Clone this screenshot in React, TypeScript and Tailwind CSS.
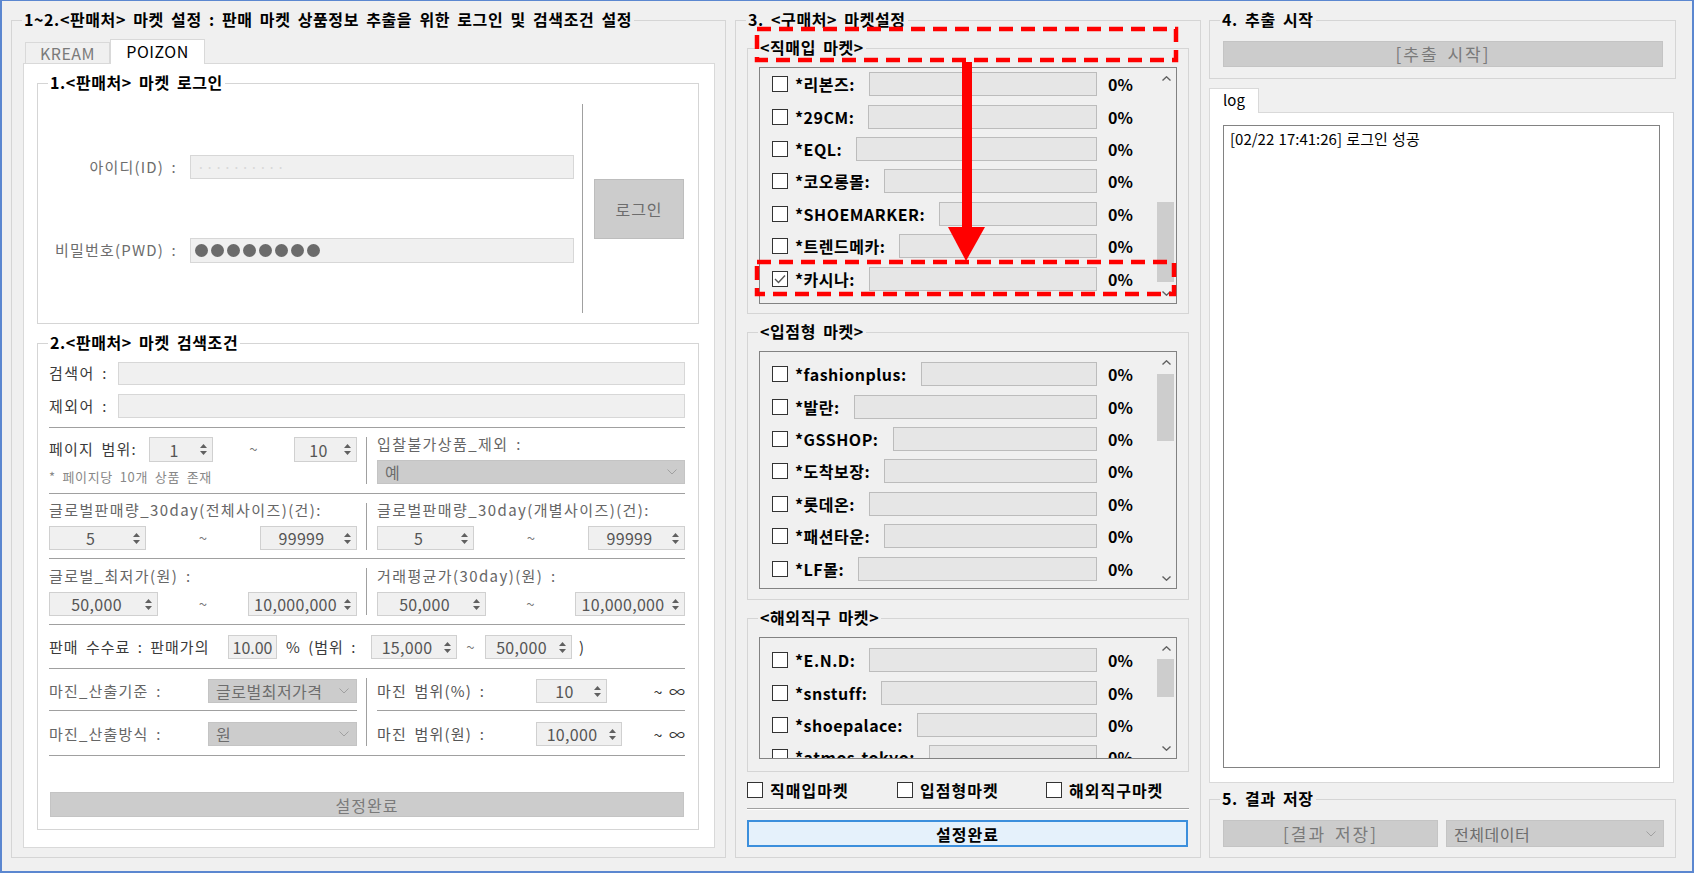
import React from 'react'

// WinForms-style "market settings" window: left = sell-side login/search,
// middle = buy-side market lists, right = extract/log/save.

type MarketRow = { name: string; checked?: boolean }

const DIRECT: MarketRow[] = [
  { name: '*리본즈:' },
  { name: '*29CM:' },
  { name: '*EQL:' },
  { name: '*코오롱몰:' },
  { name: '*SHOEMARKER:' },
  { name: '*트렌드메카:' },
  { name: '*카시나:', checked: true },
]
const STORE: MarketRow[] = ['*fashionplus:', '*발란:', '*GSSHOP:', '*도착보장:', '*롯데온:', '*패션타운:', '*LF몰:'].map(name => ({ name }))
const OVERSEAS: MarketRow[] = ['*E.N.D:', '*snstuff:', '*shoepalace:', '*atmos-tokyo:'].map(name => ({ name }))

function GroupBox({ title, bg = 'bg-[#f0f0f0]', className = '', children }: { title: string; bg?: string; className?: string; children?: React.ReactNode }) {
  return (
    <div className={`relative shrink-0 border border-[#d5d5d5] ${className}`}>
      <span className={`absolute left-[10px] top-[-12px] whitespace-nowrap px-[2px] text-[16px] font-bold leading-[20px] tracking-[0.6px] text-black ${bg}`}>{title}</span>
      {children}
    </div>
  )
}

const Sep = ({ className = '' }: { className?: string }) => (
  <div className={`h-[2px] shrink-0 border-y border-t-[#a0a0a0] border-b-white ${className}`} />
)

const VSep = ({ className = '' }: { className?: string }) => (
  <div className={`mx-[9px] w-[2px] shrink-0 border-x border-l-[#a0a0a0] border-r-white ${className}`} />
)

const Chevron = ({ color = '#a0a0a0' }: { color?: string }) => (
  <svg width="10" height="6" viewBox="0 0 10 6"><polyline points="0.5,0.5 5,5 9.5,0.5" fill="none" stroke={color} strokeWidth="1" /></svg>
)

function Spin({ value, className }: { value: string; className: string }) {
  return (
    <div className={`flex shrink-0 items-center border border-[#d0d0d0] bg-[#f0f0f0] ${className}`}>
      <span className="flex-1 text-center text-[16px] leading-none tracking-[0.3px] text-[#555]">{value}</span>
      <div className="mr-[3px] flex w-[11px] flex-col items-center gap-[3px]">
        <svg width="7" height="4" viewBox="0 0 7 4"><polygon points="0,4 3.5,0 7,4" fill="#606060" /></svg>
        <svg width="7" height="4" viewBox="0 0 7 4"><polygon points="0,0 3.5,4 7,0" fill="#606060" /></svg>
      </div>
    </div>
  )
}

function Combo({ value, className }: { value: string; className: string }) {
  return (
    <div className={`flex shrink-0 items-center border border-[#c4c4c4] bg-[#cccccc] px-[7px] text-[16px] tracking-[0.5px] text-[#6d6d6d] ${className}`}>
      <span className="flex-1 whitespace-nowrap leading-none">{value}</span>
      <Chevron />
    </div>
  )
}

function CheckBox({ checked }: { checked?: boolean }) {
  return (
    <div className="flex h-[16px] w-[16px] shrink-0 items-center justify-center border border-[#333] bg-white">
      {checked && (
        <svg width="12" height="10" viewBox="0 0 12 10"><polyline points="1,5 4.5,8.5 11,1.5" fill="none" stroke="#555" strokeWidth="1.4" /></svg>
      )}
    </div>
  )
}

function RangeBlock({ label, a, b, wa, wb, top = 'mt-[5px]' }: { label: string; a: string; b: string; wa: string; wb: string; top?: string }) {
  return (
    <div className="flex w-[308px] shrink-0 flex-col">
      <span className={`h-[20px] whitespace-nowrap text-[15px] leading-[20px] tracking-[1.4px] text-[#666] ${top}`}>{label}</span>
      <div className="mt-[6px] flex h-[24px] items-center">
        <Spin value={a} className={`h-full ${wa}`} />
        <span className="flex-1 text-center text-[15px] text-[#777]">~</span>
        <Spin value={b} className={`h-full ${wb}`} />
      </div>
    </div>
  )
}

function ListBox({ rows, className, padTop, thumbTop, thumbH }: { rows: MarketRow[]; className: string; padTop: string; thumbTop: number; thumbH: number }) {
  return (
    <div className={`flex w-[418px] border border-[#828282] bg-[#f0f0f0] ${className}`}>
      <div className={`min-w-0 flex-1 overflow-hidden pl-[12px] ${padTop}`}>
        {rows.map(r => (
          <div key={r.name} className="flex h-[32.4px] items-center">
            <CheckBox checked={r.checked} />
            <span className="ml-[7px] whitespace-nowrap text-[16px] font-bold leading-none tracking-[0.5px] text-black">{r.name}</span>
            <div className="ml-[14px] h-[24px] min-w-0 flex-1 border border-[#bcbcbc] bg-[#e6e6e6]" />
            <span className="ml-[11px] w-[48px] shrink-0 text-[16px] font-bold leading-none text-black">0%</span>
          </div>
        ))}
      </div>
      <div className="flex w-[20px] shrink-0 flex-col">
        <div className="flex h-[20px] items-center justify-center">
          <svg width="9" height="5" viewBox="0 0 9 5"><polyline points="0.5,4.5 4.5,0.8 8.5,4.5" fill="none" stroke="#606060" strokeWidth="1.4" /></svg>
        </div>
        <div className="flex-1">
          <div className="ml-[1px] w-[17px] bg-[#cdcdcd]" style={{ marginTop: thumbTop, height: thumbH }} />
        </div>
        <div className="flex h-[20px] items-center justify-center">
          <svg width="9" height="5" viewBox="0 0 9 5"><polyline points="0.5,0.5 4.5,4.2 8.5,0.5" fill="none" stroke="#606060" strokeWidth="1.4" /></svg>
        </div>
      </div>
    </div>
  )
}

function LoginGroup() {
  return (
    <GroupBox title="1.<판매처> 마켓 로그인" bg="bg-white" className="h-[241px] w-[662px]">
      <div className="flex pt-[20px]">
        <div className="flex w-[536px] flex-col">
          <div className="mt-[51px] flex h-[24px] items-center">
            <span className="w-[139px] text-right text-[15px] tracking-[1.2px] text-[#6d6d6d]">아이디(ID) :</span>
            <div className="ml-[13px] flex h-full flex-1 items-center border border-[#d7d7d7] bg-[#f0f0f0] pl-[6px] text-[14px] tracking-[1px] text-[#d8d8d8]">··········</div>
          </div>
          <div className="mt-[59px] flex h-[25px] items-center">
            <span className="w-[139px] text-right text-[15px] tracking-[1.2px] text-[#6d6d6d]">비밀번호(PWD) :</span>
            <div className="ml-[13px] flex h-full flex-1 items-center gap-[3px] border border-[#d7d7d7] bg-[#f0f0f0] pl-[4px]">
              {Array.from({ length: 8 }).map((_, i) => (
                <span key={i} className="h-[13px] w-[13px] rounded-full bg-[#6b6b6b]" />
              ))}
            </div>
          </div>
        </div>
        <div className="ml-[8px] h-[209px] w-[2px] border-x border-l-[#a0a0a0] border-r-white" />
        <div className="ml-[10px] mt-[75px] flex h-[60px] w-[90px] items-center justify-center border border-[#bdbdbd] bg-[#cccccc] text-[16px] tracking-[1px] text-[#6d6d6d]">로그인</div>
      </div>
    </GroupBox>
  )
}

function SearchGroup() {
  return (
    <GroupBox title="2.<판매처> 마켓 검색조건" bg="bg-white" className="mt-[19px] flex h-[487px] w-[662px] flex-col pl-[11px] pr-[13px] pt-[18px]">
      <div className="flex h-[23px] items-center">
        <span className="w-[69px] text-[15px] tracking-[1.4px] text-[#3a3a3a]">검색어 :</span>
        <div className="h-full flex-1 border border-[#d7d7d7] bg-[#f0f0f0]" />
      </div>
      <div className="mt-[9px] flex h-[24px] items-center">
        <span className="w-[69px] text-[15px] tracking-[1.4px] text-[#3a3a3a]">제외어 :</span>
        <div className="h-full flex-1 border border-[#d7d7d7] bg-[#f0f0f0]" />
      </div>
      <Sep className="mt-[9px]" />

      <div className="flex h-[64px]">
        <div className="flex w-[308px] shrink-0 flex-col">
          <div className="mt-[8px] flex h-[25px] items-center">
            <span className="w-[100px] whitespace-nowrap text-[15px] tracking-[1.2px] text-[#3a3a3a]">페이지 범위:</span>
            <Spin value="1" className="h-full w-[64px]" />
            <span className="flex-1 text-center text-[15px] text-[#777]">~</span>
            <Spin value="10" className="h-full w-[63px]" />
          </div>
          <span className="mt-[5px] h-[20px] text-[13px] leading-[20px] tracking-[0.7px] text-[#888]">* 페이지당 10개 상품 존재</span>
        </div>
        <VSep className="mt-[8px] h-[47px]" />
        <div className="flex w-[308px] shrink-0 flex-col">
          <span className="mt-[5px] h-[20px] text-[15px] leading-[20px] tracking-[1.4px] text-[#666]">입찰불가상품_제외 :</span>
          <Combo value="예" className="mt-[6px] h-[24px] w-full" />
        </div>
      </div>
      <Sep />

      <div className="flex h-[63px]">
        <RangeBlock label="글로벌판매량_30day(전체사이즈)(건):" a="5" b="99999" wa="w-[97px]" wb="w-[97px]" />
        <VSep className="mt-[8px] h-[47px]" />
        <RangeBlock label="글로벌판매량_30day(개별사이즈)(건):" a="5" b="99999" wa="w-[97px]" wb="w-[97px]" />
      </div>
      <Sep />

      <div className="flex h-[64px]">
        <RangeBlock label="글로벌_최저가(원) :" a="50,000" b="10,000,000" wa="w-[109px]" wb="w-[109px]" top="mt-[6px]" />
        <VSep className="mt-[8px] h-[47px]" />
        <RangeBlock label="거래평균가(30day)(원) :" a="50,000" b="10,000,000" wa="w-[109px]" wb="w-[110px]" top="mt-[6px]" />
      </div>
      <Sep />

      <div className="flex h-[42px] items-center text-[15px] tracking-[1px] text-[#3a3a3a]">
        <span className="w-[179px] whitespace-nowrap">판매 수수료 : 판매가의</span>
        <div className="flex h-[24px] w-[49px] items-center justify-center border border-[#d0d0d0] bg-[#f0f0f0] text-[16px] tracking-normal text-[#555]">10.00</div>
        <span className="ml-[9px] w-[85px] whitespace-nowrap">% (범위 :</span>
        <Spin value="15,000" className="h-[24px] w-[86px]" />
        <span className="w-[28px] text-center text-[#777]">~</span>
        <Spin value="50,000" className="h-[24px] w-[87px]" />
        <span className="ml-[7px]">)</span>
      </div>
      <Sep />

      <div className="flex h-[85px]">
        <div className="flex w-[308px] shrink-0 flex-col">
          <div className="mt-[9px] flex h-[24px] items-center">
            <span className="w-[159px] text-[15px] tracking-[1.2px] text-[#666]">마진_산출기준 :</span>
            <Combo value="글로벌최저가격" className="h-full flex-1" />
          </div>
          <Sep className="mt-[7px]" />
          <div className="mt-[10px] flex h-[24px] items-center">
            <span className="w-[159px] text-[15px] tracking-[1.2px] text-[#666]">마진_산출방식 :</span>
            <Combo value="원" className="h-full flex-1" />
          </div>
        </div>
        <VSep className="mt-[8px] h-[68px]" />
        <div className="flex w-[308px] shrink-0 flex-col">
          <div className="mt-[9px] flex h-[24px] items-center">
            <span className="w-[159px] text-[15px] tracking-[1.2px] text-[#555]">마진 범위(%) :</span>
            <Spin value="10" className="h-full w-[71px]" />
            <span className="flex-1 text-right text-[16px] text-[#333]">~ ∞</span>
          </div>
          <Sep className="mt-[7px]" />
          <div className="mt-[10px] flex h-[24px] items-center">
            <span className="w-[159px] text-[15px] tracking-[1.2px] text-[#555]">마진 범위(원) :</span>
            <Spin value="10,000" className="h-full w-[86px]" />
            <span className="flex-1 text-right text-[16px] text-[#333]">~ ∞</span>
          </div>
        </div>
      </div>
      <Sep />

      <div className="ml-px mt-[35px] flex h-[25px] w-[634px] items-center justify-center border border-[#c4c4c4] bg-[#cccccc] text-[16px] tracking-[1px] text-[#7a7a7a]">설정완료</div>
    </GroupBox>
  )
}

export default function App() {
  return (
    <div className="relative flex h-[873px] w-[1694px] items-start overflow-hidden border-x-2 border-b-2 border-t border-[#5b87d0] bg-[#f0f0f0] pl-[9px] pt-[19px] font-['Noto_Sans_CJK_KR','Noto_Sans',sans-serif] text-black [word-spacing:3px]">
      {/* 1~2. sell-side settings */}
      <GroupBox title="1~2.<판매처> 마켓 설정 : 판매 마켓 상품정보 추출을 위한 로그인 및 검색조건 설정" className="h-[838px] w-[715px] pl-[11px] pt-[18px]">
        <div className="flex h-[24px] items-end pl-[2px]">
          <div className="h-[21px] w-[85px] border border-b-0 border-[#d9d9d9] bg-[#f0f0f0] text-center text-[16px] leading-[20px] tracking-[0.5px] text-[#7a7a7a]">KREAM</div>
          <div className="relative z-10 -mb-px h-[25px] w-[95px] border border-b-0 border-[#d9d9d9] bg-white text-center text-[16px] leading-[22px] tracking-[0.5px] text-black">POIZON</div>
        </div>
        <div className="h-[785px] w-[692px] border border-[#d9d9d9] bg-white pl-[13px] pt-[19px]">
          <LoginGroup />
          <SearchGroup />
        </div>
      </GroupBox>

      {/* 3. buy-side markets */}
      <GroupBox title="3. <구매처> 마켓설정" className="ml-[9px] flex h-[838px] w-[466px] flex-col pl-[11px] pt-[27px]">
        <GroupBox title="<직매입 마켓>" className="h-[266px] w-[442px] pl-[11px] pt-[18px]">
          <ListBox rows={DIRECT} className="h-[237px]" padTop="pt-0" thumbTop={114} thumbH={80} />
        </GroupBox>
        <GroupBox title="<입점형 마켓>" className="mt-[18px] h-[268px] w-[442px] pl-[11px] pt-[18px]">
          <ListBox rows={STORE} className="h-[238px]" padTop="pt-[6px]" thumbTop={2} thumbH={67} />
        </GroupBox>
        <GroupBox title="<해외직구 마켓>" className="mt-[18px] h-[154px] w-[442px] pl-[11px] pt-[18px]">
          <ListBox rows={OVERSEAS} className="h-[122px]" padTop="pt-[6px]" thumbTop={1} thumbH={38} />
        </GroupBox>
        <div className="mt-[6px] flex h-[24px] items-center text-[16px] font-bold tracking-[1px]">
          <div className="flex w-[150px] items-center gap-[7px]"><CheckBox />직매입마켓</div>
          <div className="flex w-[149px] items-center gap-[7px]"><CheckBox />입점형마켓</div>
          <div className="flex items-center gap-[7px]"><CheckBox />해외직구마켓</div>
        </div>
        <Sep className="mt-[6px] w-[442px]" />
        <div className="mt-[10px] flex h-[27px] w-[441px] items-center justify-center border-2 border-[#3c8fdc] bg-[#e5f1fb] text-[16px] font-bold tracking-[1px]">설정완료</div>
      </GroupBox>

      {/* 4~5. extract / log / save */}
      <div className="ml-[8px] flex w-[467px] shrink-0 flex-col">
        <GroupBox title="4. 추출 시작" className="h-[59px] pl-[13px] pt-[20px]">
          <div className="flex h-[26px] w-[440px] items-center justify-center border border-[#c4c4c4] bg-[#cccccc] text-[17px] tracking-[2px] text-[#7a7a7a]">[추출 시작]</div>
        </GroupBox>
        <div className="mt-[9px] flex h-[24px]">
          <div className="relative z-10 -mb-px w-[50px] border border-b-0 border-[#d9d9d9] bg-white text-center text-[15px] leading-[22px]">log</div>
        </div>
        <div className="h-[671px] w-[465px] border border-[#d9d9d9] bg-white pl-[13px] pt-[12px]">
          <div className="h-[643px] w-[437px] border border-[#828282] bg-white px-[6px] pt-[3px] text-[15px] leading-[20px] [word-spacing:1px]">[02/22 17:41:26] 로그인 성공</div>
        </div>
        <GroupBox title="5. 결과 저장" className="mt-[16px] h-[59px] pl-[13px] pt-[20px]">
          <div className="flex h-[27px]">
            <div className="flex w-[215px] items-center justify-center border border-[#c4c4c4] bg-[#cccccc] text-[17px] tracking-[2px] text-[#7a7a7a]">[결과 저장]</div>
            <Combo value="전체데이터" className="ml-[8px] w-[218px]" />
          </div>
        </GroupBox>
      </div>

      {/* red annotation overlay */}
      <svg className="pointer-events-none absolute -left-[2px] -top-px" width="1694" height="873">
        <rect x="757" y="29" width="419" height="31" fill="none" stroke="#ff0000" strokeWidth="4.5" strokeDasharray="14 8" />
        <rect x="757" y="262" width="417" height="32" fill="none" stroke="#ff0000" strokeWidth="4.5" strokeDasharray="14 8" />
        <rect x="962" y="62" width="10" height="166" fill="#ff0000" />
        <polygon points="948,227 985,227 966,261" fill="#ff0000" />
      </svg>
    </div>
  )
}
